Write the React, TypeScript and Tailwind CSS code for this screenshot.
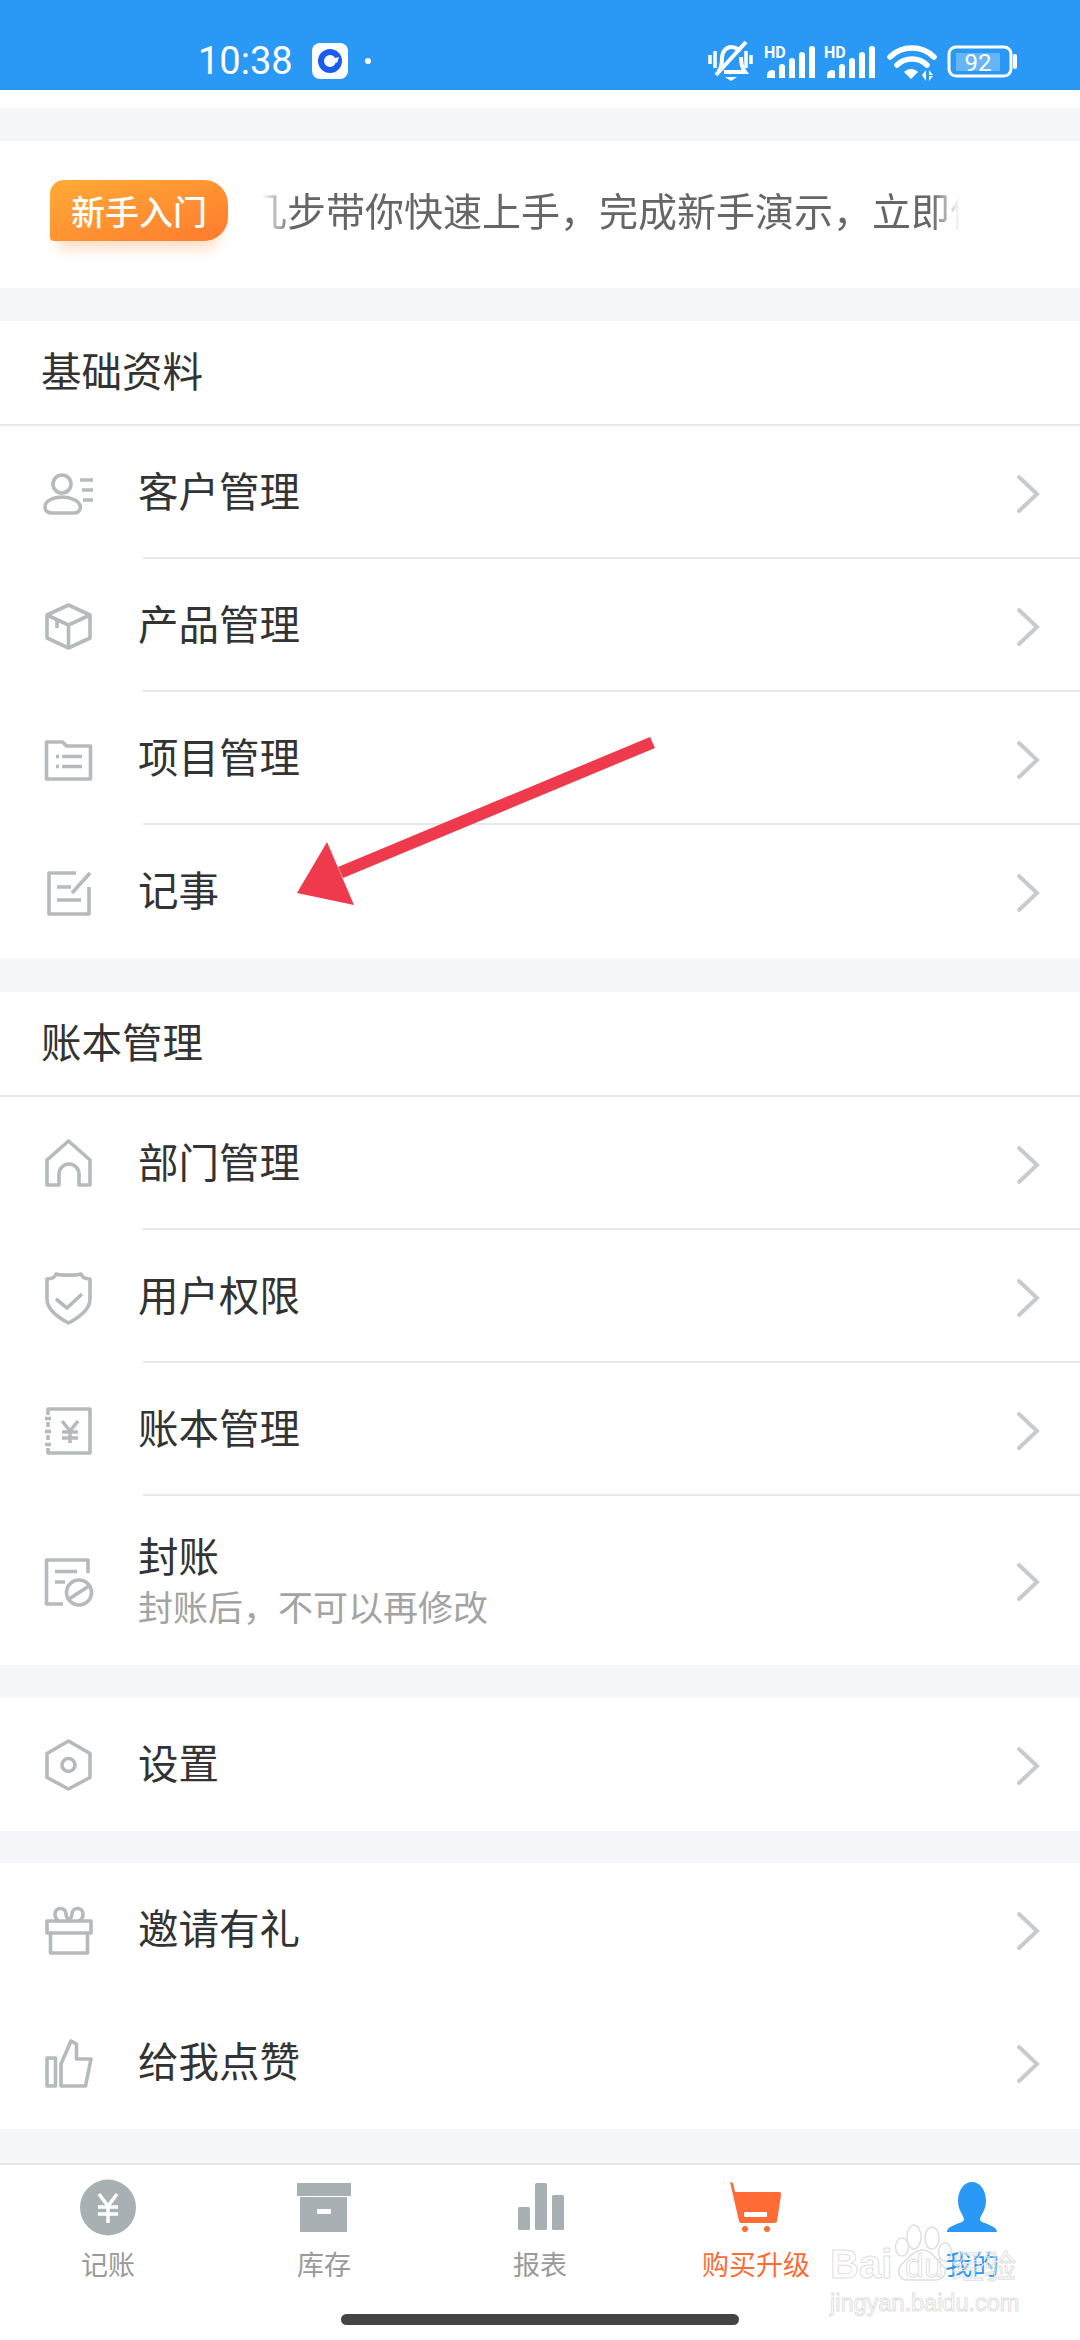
import type { ReactNode } from 'react';

const CJK = "font-['Noto_Sans_CJK_SC','Noto_Sans',sans-serif]";

const Icon = ({ children }: { children: ReactNode }) => (
  <svg width="60" height="60" viewBox="0 0 60 60" fill="none" stroke="#b5babd" strokeWidth="3.6" strokeLinejoin="round" className="shrink-0">
    {children}
  </svg>
);

const icons: Record<string, ReactNode> = {
  customer: (
    <>
      <circle cx="24" cy="21" r="9" />
      <path d="M7 44c0-6 8-10 17-10 5 0 9 1 13 3 5 3 6 6 5 9-1 3-3 4-6 4H14c-4 0-7-2-7-6z" />
      <path d="M42 17h13M44 27h11M45 37h10" />
    </>
  ),
  product: (
    <>
      <path d="M30.5 9L52 19v23L30.5 52 9 42V19z" />
      <path d="M9 19l21.5 10L52 19M30.5 29v23M19 24v8" />
    </>
  ),
  project: (
    <>
      <path d="M8.5 13h16l4 4h24v33h-44z" />
      <path d="M18 27.5h3M18 37.5h3M24 27.5h20M24 37.5h20" />
    </>
  ),
  note: (
    <>
      <path d="M38 11H11v41h40V25" />
      <path d="M52 11L34 31M19 25h14M19 38h24" />
    </>
  ),
  dept: <path d="M30.5 7L52 26v25H41V40a10 10 0 0 0-20 0v11H9V26z" />,
  user: (
    <>
      <path d="M18 7c4 1.5 21 1.5 25 0 1 3 4 5 9 5v20c0 11-12 19-21.5 24C21 51 9 43 9 32V12c5 0 8-2 9-5z" />
      <path d="M18 32l11 9 15-14" />
    </>
  ),
  book: (
    <>
      <path d="M10 15V9h42v44H10v-5M10 22v5M10 35v5" />
      <path d="M7 18.5h6M7 31.5h6M7 44.5h6" />
      <path d="M24 21l8 10 8-10M32 31v12M24 32h16M24 38h16" />
    </>
  ),
  close: (
    <>
      <path d="M25 53H8.5V9H50v13" />
      <path d="M17 20.5h22M17 31h10" />
      <circle cx="41" cy="41.5" r="12.5" />
      <path d="M31 48l20-13" />
    </>
  ),
  settings: (
    <>
      <path d="M30.5 6L52 18.5v24L30.5 54 9 42.5v-24z" />
      <circle cx="30.5" cy="30" r="6.5" />
    </>
  ),
  gift: (
    <>
      <path d="M9 21h44v12H9zM12.5 33h37v20h-37z" />
      <path d="M31 21c-2-3-3-4-3-7a5.5 5.5 0 0 0-11 0c0 4 2 6 4 7M31 21c2-3 3-4 3-7a5.5 5.5 0 0 1 11 0c0 4-2 6-4 7" />
    </>
  ),
  like: (
    <>
      <path d="M9 25h8.5v28H9z" />
      <path d="M23 53V31L33 8l5.5 3v15H53l-5.5 27z" />
    </>
  ),
};

const Chevron = () => (
  <svg width="24" height="40" viewBox="0 0 24 40" fill="none" stroke="#c8cbcd" strokeWidth="4" strokeLinecap="round" className="shrink-0 mt-[2px]">
    <path d="M3 3l18 17L3 37" />
  </svg>
);

function Row({ icon, title, sub, divider }: { icon: string; title: string; sub?: string; divider?: boolean }) {
  return (
    <div className={`flex items-center pl-[38px] pr-[40px] relative ${sub ? 'h-[169px]' : 'h-[133px]'}`}>
      <Icon>{icons[icon]}</Icon>
      <div className="ml-[40px] flex-1 pb-[5px]">
        <div className={`text-[40.5px] leading-[52px] text-[#333] ${sub ? 'mb-[3px]' : ''}`}>{title}</div>
        {sub && <div className="text-[35px] leading-[44px] text-[#a3a3a3]">{sub}</div>}
      </div>
      <Chevron />
      {divider && <div className="absolute left-[143px] right-0 bottom-0 h-[2px] bg-[#e8e8e8]" />}
    </div>
  );
}

function Header({ title }: { title: string }) {
  return (
    <div className="h-[105px] pl-[41px] pb-[5px] flex items-center border-b-2 border-[#e8e8e8] text-[40.5px] text-[#333]">{title}</div>
  );
}

function NavItem({ label, color, children }: { label: string; color: string; children: ReactNode }) {
  return (
    <div className="w-[216px] flex flex-col items-center">
      <svg width="64" height="62" viewBox="0 0 64 62" className="mt-[14px]">
        {children}
      </svg>
      <div className={`text-[27px] leading-[36px] mt-[5px] ${color}`}>{label}</div>
    </div>
  );
}

// "Baidu 经验" image watermark over the bottom right corner
function Watermark() {
  const outline = "text-transparent [-webkit-text-stroke:1px_#dfdfdf] font-['Liberation_Sans',sans-serif]";
  return (
    <div className="absolute left-[830px] top-[2232px] w-[192px] h-[86px] pointer-events-none">
      <svg width="70" height="60" viewBox="0 0 70 60" fill="none" stroke="#dfdfdf" strokeWidth="1.5" className="absolute left-[60px] top-[-8px]">
        <ellipse cx="12" cy="23" rx="6.5" ry="9" />
        <ellipse cx="24" cy="13" rx="7" ry="12" />
        <ellipse cx="42" cy="14" rx="7" ry="11" />
        <ellipse cx="55" cy="28" rx="6.5" ry="9" />
        <path d="M33 26c8 0 12 8 18 14 8 6 4 16-6 16H18c-10 0-12-10-6-16 6-6 12-14 21-14z" />
      </svg>
      <div className="flex items-end h-[52px]">
        <span className={`${outline} text-[40px] font-bold leading-[40px] w-[75px]`}>Bai</span>
        <span className={`${outline} text-[34px] leading-[38px] w-[47px]`}>du</span>
        <span className="text-transparent [-webkit-text-stroke:1px_#dfdfdf] text-[32px] leading-[40px] whitespace-nowrap">经验</span>
      </div>
      <div className={`${outline} text-[23.5px] leading-[30px] mt-[4px] whitespace-nowrap`}>jingyan.baidu.com</div>
    </div>
  );
}

export default function App() {
  return (
    <div className={`relative w-[1080px] h-[2340px] overflow-hidden bg-[#f5f7fa] flex flex-col ${CJK}`}>
      {/* status bar */}
      <div className="h-[90px] shrink-0 bg-[#2a99f6] flex items-center pl-[198px] pr-[62px] pt-[32px] text-white">
        <span className="font-['Roboto',sans-serif] text-[38px] leading-none">10:38</span>
        <div className="ml-[19px] w-[36px] h-[36px] rounded-[8px] bg-white flex items-center justify-center">
          <svg width="26" height="26" viewBox="0 0 26 26">
            <circle cx="13" cy="13" r="9" fill="none" stroke="#1a5cf0" strokeWidth="6" />
            <path d="M15 11l7-2-2 6z" fill="#fff" />
          </svg>
        </div>
        <div className="ml-[17px] w-[6px] h-[6px] rounded-full bg-white" />
        <div className="flex-1" />
        <svg width="310" height="44" viewBox="0 0 310 44" fill="none" stroke="#fff" className="shrink-0">
          {/* muted bell */}
          <path d="M2 16v9M7 12v17M38 12v17M43 16v9" strokeWidth="3.5" />
          <path d="M10 33c3-3 4-7 4-14 0-6 4-11 9-11 4 0 7 2 8 5M33 18c0 7 1 11 4 15H16" strokeWidth="4" />
          <path d="M8 36L38 3" strokeWidth="4" />
          <path d="M17 38h12l-6 4z" fill="#fff" stroke="none" />
          {/* signal */}
          <g fontFamily="Roboto, sans-serif" fontSize="16" fontWeight="700" fill="#fff" stroke="none">
            <text x="56" y="19">HD</text>
            <text x="116" y="19">HD</text>
          </g>
          <g fill="#fff" stroke="none">
            <path d="M59 39v-3a5 5 0 0 1 8-4v7zM71 39V28a3 3 0 0 1 6 0v11zM81 39V22a3 3 0 0 1 6 0v17zM91 39V16a3 3 0 0 1 6 0v23zM101 39V10a3 3 0 0 1 6 0v29z" />
            <path d="M119 39v-3a5 5 0 0 1 8-4v7zM131 39V28a3 3 0 0 1 6 0v11zM141 39V22a3 3 0 0 1 6 0v17zM151 39V16a3 3 0 0 1 6 0v23zM161 39V10a3 3 0 0 1 6 0v29z" />
          </g>
          {/* wifi */}
          <path d="M182 18c12-12 32-12 44 0M189 26c8-8 22-8 30 0" strokeWidth="5.5" strokeLinecap="round" />
          <path d="M196 33c4-4 10-4 14 0l-7 7z" fill="#fff" stroke="none" />
          <path d="M214 36l4-5v11zM221 31l4 5h-4zM221 42v-5h4z" fill="#fff" stroke="none" />
          {/* battery */}
          <rect x="241" y="8" width="62" height="29" rx="7" strokeWidth="3" />
          <rect x="248" y="14" width="44" height="18" fill="#fff" fillOpacity="0.28" stroke="none" />
          <path d="M307 17v11" strokeWidth="4" strokeLinecap="round" />
          <text x="270" y="32" textAnchor="middle" fontSize="24" fill="#fff" stroke="none" fontFamily="Roboto, sans-serif">92</text>
        </svg>
      </div>

      <div className="h-[18px] shrink-0 bg-white" />
      <div className="h-[33px] shrink-0" />

      {/* guide banner */}
      <div className="h-[147px] shrink-0 bg-white flex items-center pl-[50px] pb-[8px]">
        <div className="w-[178px] h-[61px] rounded-tl-[14px] rounded-tr-[24px] rounded-br-[24px] rounded-bl-[4px] bg-gradient-to-br from-[#ffab36] to-[#ff7a2e] shadow-[0_16px_14px_-8px_rgba(255,160,90,0.35)] flex items-center justify-center text-[34px] text-white font-medium leading-none">
          新手入门
        </div>
        <div className="ml-[34px] w-[698px] pb-[2px] overflow-hidden whitespace-nowrap text-[39px] text-[#666] [mask-image:linear-gradient(to_right,transparent,black_30px,black_670px,transparent)]">
          <span className="inline-block ml-[-14px]">几步带你快速上手，完成新手演示，立即体验</span>
        </div>
      </div>

      <div className="h-[33px] shrink-0" />
      <div className="bg-white shrink-0">
        <Header title="基础资料" />
        <Row icon="customer" title="客户管理" divider />
        <Row icon="product" title="产品管理" divider />
        <Row icon="project" title="项目管理" divider />
        <Row icon="note" title="记事" />
      </div>

      <div className="h-[34px] shrink-0" />
      <div className="bg-white shrink-0">
        <Header title="账本管理" />
        <Row icon="dept" title="部门管理" divider />
        <Row icon="user" title="用户权限" divider />
        <Row icon="book" title="账本管理" divider />
        <Row icon="close" title="封账" sub="封账后，不可以再修改" />
      </div>

      <div className="h-[33px] shrink-0" />
      <div className="bg-white shrink-0">
        <Row icon="settings" title="设置" />
      </div>

      <div className="h-[32px] shrink-0" />
      <div className="bg-white shrink-0">
        <Row icon="gift" title="邀请有礼" />
        <Row icon="like" title="给我点赞" />
      </div>

      <div className="flex-1" />

      {/* bottom tabs */}
      <div className="relative h-[177px] shrink-0 bg-white border-t-2 border-[#e4e6e8]">
        <div className="flex">
          <NavItem label="记账" color="text-[#9a9a9a]">
            <circle cx="32" cy="28.5" r="28" fill="#a9b0b3" />
            <path d="M23 15l9 12 9-12M32 27v17M22 28h20M22 35h20" fill="none" stroke="#fff" strokeWidth="3.5" />
          </NavItem>
          <NavItem label="库存" color="text-[#9a9a9a]">
            <path d="M5 4h54v13H5zM8 18h47v35H8z" fill="#a9b0b3" />
            <rect x="25" y="30" width="14" height="5" rx="1" fill="#fff" />
          </NavItem>
          <NavItem label="报表" color="text-[#9a9a9a]">
            <rect x="10" y="28" width="12" height="23" rx="1.5" fill="#a9b0b3" />
            <rect x="27" y="4" width="12" height="47" rx="1.5" fill="#a9b0b3" />
            <rect x="44" y="16" width="12" height="35" rx="1.5" fill="#a9b0b3" />
          </NavItem>
          <NavItem label="购买升级" color="text-[#ff6b35]">
            <path d="M6 3l3 1 2 9h44c2 0 2 1 2 3l-4 26c0 1-1 2-3 2H17c-1 0-2-1-2-2z" fill="#ff6b35" />
            <rect x="20" y="33" width="23" height="5" rx="1" fill="#fff" />
            <circle cx="21" cy="50" r="3" fill="#ff6b35" />
            <circle cx="43" cy="50" r="3" fill="#ff6b35" />
          </NavItem>
          <NavItem label="我的" color="text-[#2a99f6]">
            <path d="M32 3c8 0 14 8 14 19 0 10-6 14-6 19 0 3 17 5 17 12H7c0-7 17-9 17-12 0-5-6-9-6-19C18 11 24 3 32 3z" fill="#2a99f6" />
          </NavItem>
        </div>
        <div className="absolute left-[341px] top-[149px] w-[398px] h-[11px] rounded-full bg-[#444]" />
      </div>

      <Watermark />

      {/* red annotation arrow */}
      <svg width="1080" height="2340" viewBox="0 0 1080 2340" className="absolute left-0 top-0 pointer-events-none">
        <path d="M650 737L655 748L343 878L338 867z" fill="#ee3a4c" />
        <path d="M297 893L327 842L354 905z" fill="#ee3a4c" />
      </svg>
    </div>
  );
}
